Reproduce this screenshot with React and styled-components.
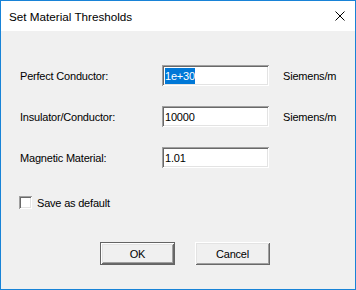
import React from "react";
import styled, { createGlobalStyle } from "styled-components";

const GlobalStyle = createGlobalStyle`
  html, body { margin: 0; padding: 0; background: #f0f0f0; }
  * { box-sizing: border-box; }
`;

const Window = styled.div`
  width: 356px;
  height: 290px;
  border: 1px solid #1883d7;
  background: #f0f0f0;
  display: flex;
  flex-direction: column;
  font-family: "Liberation Sans", Arial, sans-serif;
  font-size: 11px;
  letter-spacing: -0.2px;
  color: #000;
`;

const TitleBar = styled.div`
  height: 30px;
  background: #ffffff;
  display: flex;
  align-items: center;
  justify-content: space-between;
  padding-left: 8px;
  padding-right: 10px;
`;

const Title = styled.span`
  font-family: "Liberation Sans", Arial, sans-serif;
  font-size: 11.7px;
  letter-spacing: 0;
  color: #000;
`;

const CloseIcon = styled.svg`
  width: 10px;
  height: 10px;
  display: block;
`;

const Body = styled.div`
  flex: 1;
  padding: 34px 0 0 19px;
  display: flex;
  flex-direction: column;
`;

const FieldGrid = styled.div`
  display: grid;
  grid-template-columns: 142px 107px auto;
  grid-auto-rows: 21px;
  row-gap: 20px;
  align-items: center;
`;

const Label = styled.span`
  white-space: nowrap;
`;

const TextBox = styled.div`
  width: 107px;
  height: 21px;
  background: #ffffff;
  display: flex;
  align-items: center;
  padding-left: 3px;
  box-shadow: inset 1px 1px #a0a0a0, inset -1px -1px #ffffff,
    inset 2px 2px #696969, inset -2px -2px #e3e3e3;
`;

const Selected = styled.span`
  background: #0078d7;
  color: #ffffff;
  line-height: 16px;
`;

const Unit = styled.span`
  margin-left: 14px;
  white-space: nowrap;
`;

const CheckRow = styled.label`
  display: flex;
  align-items: center;
  gap: 5px;
  margin-top: 28px;
  margin-left: -1px;
`;

const CheckBox = styled.span`
  width: 13px;
  height: 13px;
  background: #ffffff;
  box-shadow: inset 1px 1px #a0a0a0, inset -1px -1px #ffffff,
    inset 2px 2px #696969, inset -2px -2px #e3e3e3;
`;

const ButtonRow = styled.div`
  display: flex;
  gap: 20px;
  margin-top: 33px;
  margin-left: 80px;
`;

const Button = styled.button`
  width: 75px;
  height: 23px;
  padding: 1px 0 0;
  margin: 0;
  background: #f0f0f0;
  font-family: "Liberation Sans", Arial, sans-serif;
  font-size: 11px;
  letter-spacing: -0.2px;
  color: #000;
  border: ${(p) => (p.$default ? "1px solid #646464" : "none")};
  box-shadow: inset 1px 1px #ffffff, inset -1px -1px #696969,
    inset 2px 2px #e3e3e3, inset -2px -2px #a0a0a0;
`;

export default function App() {
  return (
    <>
      <GlobalStyle />
      <Window>
        <TitleBar>
          <Title>Set Material Thresholds</Title>
          <CloseIcon viewBox="0 0 10 10">
            <path d="M0.5 0.5 L9.5 9.5 M9.5 0.5 L0.5 9.5" stroke="#000" strokeWidth="1" fill="none" />
          </CloseIcon>
        </TitleBar>
        <Body>
          <FieldGrid>
            <Label>Perfect Conductor:</Label>
            <TextBox>
              <Selected>1e+30</Selected>
            </TextBox>
            <Unit>Siemens/m</Unit>
            <Label>Insulator/Conductor:</Label>
            <TextBox>10000</TextBox>
            <Unit>Siemens/m</Unit>
            <Label>Magnetic Material:</Label>
            <TextBox>1.01</TextBox>
            <span />
          </FieldGrid>
          <CheckRow>
            <CheckBox />
            <span>Save as default</span>
          </CheckRow>
          <ButtonRow>
            <Button $default>OK</Button>
            <Button>Cancel</Button>
          </ButtonRow>
        </Body>
      </Window>
    </>
  );
}
